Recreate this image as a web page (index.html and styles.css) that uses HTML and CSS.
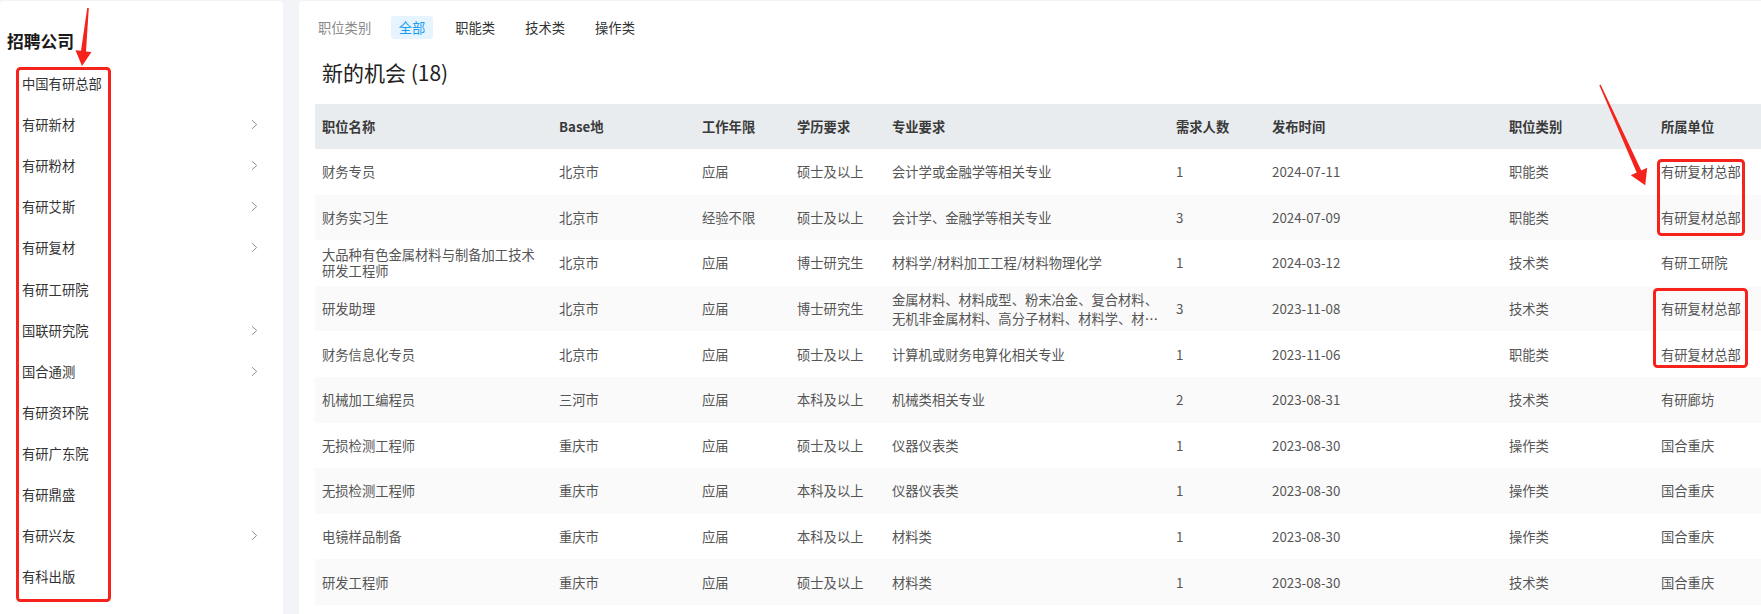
FILE: index.html
```html
<!DOCTYPE html>
<html lang="zh-CN">
<head>
<meta charset="utf-8">
<title>招聘公司</title>
<link rel="stylesheet" href="styles.css">
</head>
<body>
<div class="page">
  <aside class="side">
    <h2 class="side-title">招聘公司</h2>
    <ul class="company-list">
      <li class="company">中国有研总部</li>
      <li class="company has-sub">有研新材<svg class="chev" viewBox="0 0 8 12"><polyline points="1,1 6.5,6 1,11"/></svg></li>
      <li class="company has-sub">有研粉材<svg class="chev" viewBox="0 0 8 12"><polyline points="1,1 6.5,6 1,11"/></svg></li>
      <li class="company has-sub">有研艾斯<svg class="chev" viewBox="0 0 8 12"><polyline points="1,1 6.5,6 1,11"/></svg></li>
      <li class="company has-sub">有研复材<svg class="chev" viewBox="0 0 8 12"><polyline points="1,1 6.5,6 1,11"/></svg></li>
      <li class="company">有研工研院</li>
      <li class="company has-sub">国联研究院<svg class="chev" viewBox="0 0 8 12"><polyline points="1,1 6.5,6 1,11"/></svg></li>
      <li class="company has-sub">国合通测<svg class="chev" viewBox="0 0 8 12"><polyline points="1,1 6.5,6 1,11"/></svg></li>
      <li class="company">有研资环院</li>
      <li class="company">有研广东院</li>
      <li class="company">有研鼎盛</li>
      <li class="company has-sub">有研兴友<svg class="chev" viewBox="0 0 8 12"><polyline points="1,1 6.5,6 1,11"/></svg></li>
      <li class="company">有科出版</li>
    </ul>
  </aside>
  <main class="main">
    <div class="filters">
      <span class="filter-label">职位类别</span>
      <span class="filter active">全部</span>
      <span class="filter">职能类</span>
      <span class="filter">技术类</span>
      <span class="filter">操作类</span>
    </div>
    <h1 class="title">新的机会 (18)</h1>
    <table class="jobs">
      <colgroup>
        <col class="c-name"><col class="c-base"><col class="c-exp"><col class="c-edu"><col class="c-major"><col class="c-num"><col class="c-date"><col class="c-type"><col class="c-unit">
      </colgroup>
      <thead>
        <tr><th>职位名称</th><th>Base地</th><th>工作年限</th><th>学历要求</th><th>专业要求</th><th>需求人数</th><th>发布时间</th><th>职位类别</th><th>所属单位</th></tr>
      </thead>
      <tbody>
        <tr><td>财务专员</td><td>北京市</td><td>应届</td><td>硕士及以上</td><td><div class="clamp">会计学或金融学等相关专业</div></td><td>1</td><td>2024-07-11</td><td>职能类</td><td>有研复材总部</td></tr>
        <tr><td>财务实习生</td><td>北京市</td><td>经验不限</td><td>硕士及以上</td><td><div class="clamp">会计学、金融学等相关专业</div></td><td>3</td><td>2024-07-09</td><td>职能类</td><td>有研复材总部</td></tr>
        <tr><td><div class="name2">大品种有色金属材料与制备加工技术研发工程师</div></td><td>北京市</td><td>应届</td><td>博士研究生</td><td><div class="clamp">材料学/材料加工工程/材料物理化学</div></td><td>1</td><td>2024-03-12</td><td>技术类</td><td>有研工研院</td></tr>
        <tr><td>研发助理</td><td>北京市</td><td>应届</td><td>博士研究生</td><td><div class="clamp">金属材料、材料成型、粉末冶金、复合材料、无机非金属材料、高分子材料、材料学、材料物理与化学等相关专业</div></td><td>3</td><td>2023-11-08</td><td>技术类</td><td>有研复材总部</td></tr>
        <tr><td>财务信息化专员</td><td>北京市</td><td>应届</td><td>硕士及以上</td><td><div class="clamp">计算机或财务电算化相关专业</div></td><td>1</td><td>2023-11-06</td><td>职能类</td><td>有研复材总部</td></tr>
        <tr><td>机械加工编程员</td><td>三河市</td><td>应届</td><td>本科及以上</td><td><div class="clamp">机械类相关专业</div></td><td>2</td><td>2023-08-31</td><td>技术类</td><td>有研廊坊</td></tr>
        <tr><td>无损检测工程师</td><td>重庆市</td><td>应届</td><td>硕士及以上</td><td><div class="clamp">仪器仪表类</div></td><td>1</td><td>2023-08-30</td><td>操作类</td><td>国合重庆</td></tr>
        <tr><td>无损检测工程师</td><td>重庆市</td><td>应届</td><td>本科及以上</td><td><div class="clamp">仪器仪表类</div></td><td>1</td><td>2023-08-30</td><td>操作类</td><td>国合重庆</td></tr>
        <tr><td>电镜样品制备</td><td>重庆市</td><td>应届</td><td>本科及以上</td><td><div class="clamp">材料类</div></td><td>1</td><td>2023-08-30</td><td>操作类</td><td>国合重庆</td></tr>
        <tr><td>研发工程师</td><td>重庆市</td><td>应届</td><td>硕士及以上</td><td><div class="clamp">材料类</div></td><td>1</td><td>2023-08-30</td><td>技术类</td><td>国合重庆</td></tr>
      </tbody>
    </table>
  </main>
</div>
<svg class="marks" viewBox="0 0 1761 614" width="1761" height="614">
  <rect x="17.5" y="68.5" width="92" height="532" rx="3"/>
  <polygon class="arrow" points="87.2,7.9 88.8,8.1 86,51.4 91.5,51.9 82,66 75.5,50.3 81,50.8"/>
  <rect x="1658.5" y="160.5" width="85" height="74" rx="3"/>
  <rect x="1654.5" y="289.5" width="92" height="77" rx="3"/>
  <polygon class="arrow" points="1599.3,85.3 1600.7,84.7 1641.3,170.5 1647.2,167.8 1645.2,185.2 1630.8,175.2 1636.7,172.5"/>
</svg>
</body>
</html>
```

FILE: styles.css
```css
* { box-sizing: border-box; }
html, body {
  margin: 0;
  padding: 0;
  width: 1761px;
  height: 614px;
  overflow: hidden;
  background: #f3f4f8;
  font-family: "Noto Sans CJK SC", "Noto Sans", sans-serif;
  font-size: 13.3px;
  color: #333;
}
.page {
  display: flex;
  gap: 16px;
  padding-top: 1px;
  height: 614px;
}
.side {
  width: 283px;
  flex: none;
  background: #fff;
  border-radius: 4px 4px 0 0;
  padding: 28px 0 0 0;
}
.side-title {
  margin: 0 0 10px 7px;
  font-size: 16.8px;
  line-height: 24px;
  font-weight: 700;
  color: #1a1a1a;
}
.company-list {
  list-style: none;
  margin: 0;
  padding: 0;
}
.company {
  height: 41.1px;
  display: flex;
  align-items: center;
  justify-content: space-between;
  padding: 0 25px 0 22px;
  color: #333;
  font-size: 13.3px;
}
.chev {
  width: 7px;
  height: 11px;
  fill: none;
  stroke: #8c8c8c;
  stroke-width: 1.1;
}
.main {
  flex: 1;
  background: #fff;
  border-radius: 4px 0 0 0;
  padding: 15px 0 0 16px;
  min-width: 0;
}
.filters {
  display: flex;
  align-items: center;
  gap: 15px;
  margin-left: 3px;
  height: 23px;
}
.filter-label {
  color: #8a8a8a;
  margin-right: 5px;
}
.filter {
  padding: 0 7.5px;
  line-height: 23px;
  border-radius: 3px;
  color: #333;
}
.filter.active {
  background: #e6f4ff;
  color: #1a9cf0;
}
.title {
  margin: 19px 0 18px 7px;
  font-size: 21px;
  line-height: 28px;
  font-weight: 400;
  color: #222;
}
.jobs {
  width: 1446px;
  table-layout: fixed;
  border-collapse: collapse;
}
.c-name { width: 237px; }
.c-base { width: 143px; }
.c-exp { width: 95px; }
.c-edu { width: 95px; }
.c-major { width: 284px; }
.c-num { width: 96px; }
.c-date { width: 237px; }
.c-type { width: 152px; }
.c-unit { width: 107px; }
.jobs th {
  background: #e9ecef;
  height: 45px;
  text-align: left;
  padding: 0 7px;
  font-weight: 700;
  color: #3a3a3a;
}
.jobs td {
  height: 45.6px;
  padding: 0 7px;
  color: #555;
  vertical-align: middle;
  white-space: nowrap;
}
.jobs tbody tr:nth-child(even) td { background: #fafafa; }
.name2 {
  white-space: normal;
  line-height: 16px;
}
.clamp {
  white-space: normal;
  line-height: 19px;
  display: -webkit-box;
  -webkit-line-clamp: 2;
  -webkit-box-orient: vertical;
  overflow: hidden;
}
.marks {
  position: absolute;
  left: 0;
  top: 0;
  pointer-events: none;
}
.marks rect {
  fill: none;
  stroke: #f5231b;
  stroke-width: 3;
}
.marks .arrow {
  fill: #f5231b;
  stroke: none;
}
```
